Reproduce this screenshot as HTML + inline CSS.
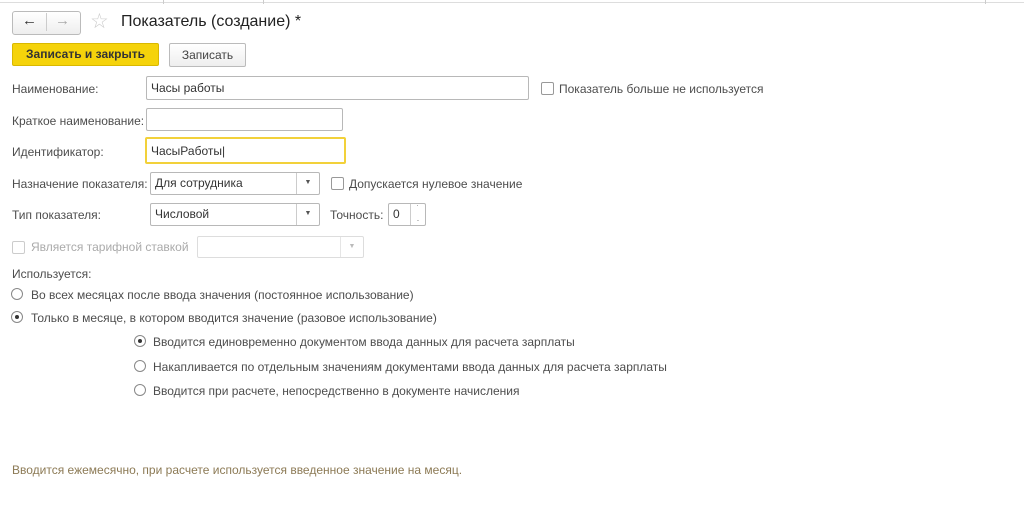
<!DOCTYPE html>
<html><head><meta charset="utf-8"><style>
body{margin:0;width:1024px;height:507px;background:#fff;font-family:"Liberation Sans",Arial,sans-serif;font-size:12px;color:#4d4d4d;position:relative;overflow:hidden}
.a{position:absolute;white-space:nowrap}
.inp{position:absolute;border:1px solid #b8b8b8;border-radius:2px;background:#fff;box-sizing:border-box;color:#333;padding:0 4px;line-height:20px}
.cb{position:absolute;width:11px;height:11px;border:1px solid #999;border-radius:2px;background:#fff}
.rb{position:absolute;width:12px;height:12px;border:1px solid #888;border-radius:50%;background:#fff;box-sizing:border-box}
.rb.on::after{content:"";position:absolute;left:3px;top:3px;width:4px;height:4px;border-radius:50%;background:#333}
.dd{position:absolute;right:0;top:0;bottom:0;width:22px;border-left:1px solid #ccc;text-align:center;font-size:7px;line-height:20px;color:#555}
</style></head><body>
<div class="a" style="left:0;top:0;width:1024px;height:2px;border-bottom:1px solid #ddd"></div>
<div class="a" style="left:163px;top:0;height:4px;border-left:1px solid #ccc"></div>
<div class="a" style="left:263px;top:0;height:4px;border-left:1px solid #ccc"></div>
<div class="a" style="left:985px;top:0;height:4px;border-left:1px solid #ccc"></div>
<div class="a" style="left:12px;top:11px;width:67px;height:22px;border:1px solid #bbb;border-radius:3px;background:linear-gradient(#fff,#eee)"></div>
<div class="a" style="left:46px;top:13px;height:18px;border-left:1px solid #ccc"></div>
<div class="a" style="left:22px;top:12px;font-size:15px;color:#333;font-weight:bold">&#8592;</div>
<div class="a" style="left:55px;top:12px;font-size:15px;color:#aaa">&#8594;</div>
<div class="a" style="left:90px;top:9px;font-size:21px;color:#ccc">&#9734;</div>
<div class="a" style="left:121px;top:13px;font-size:16px;color:#222">Показатель (создание) *</div>
<div class="a" style="left:12px;top:43px;width:147px;height:23px;background:#f5d30b;border:1px solid #d9b800;border-radius:2px;box-sizing:border-box;text-align:center;line-height:21px;color:#333;font-weight:bold">Записать и закрыть</div>
<div class="a" style="left:169px;top:43px;width:77px;height:24px;background:linear-gradient(#fff,#eee);border:1px solid #bbb;border-radius:2px;box-sizing:border-box;text-align:center;line-height:22px;color:#444">Записать</div>
<div class="a" style="left:12px;top:82px">Наименование:</div>
<div class="inp" style="left:146px;top:76px;width:383px;height:24px;line-height:22px">Часы работы</div>
<div class="cb" style="left:541px;top:82px"></div>
<div class="a" style="left:559px;top:82px">Показатель больше не используется</div>
<div class="a" style="left:12px;top:114px">Краткое наименование:</div>
<div class="inp" style="left:146px;top:108px;width:197px;height:23px"></div>
<div class="a" style="left:12px;top:145px">Идентификатор:</div>
<div class="inp" style="left:145px;top:137px;width:201px;height:27px;border:2px solid #f2d13a;line-height:25px">ЧасыРаботы|</div>
<div class="a" style="left:12px;top:177px">Назначение показателя:</div>
<div class="inp" style="left:150px;top:172px;width:170px;height:23px;line-height:21px">Для сотрудника<div class="dd">&#9660;</div></div>
<div class="cb" style="left:331px;top:177px"></div>
<div class="a" style="left:349px;top:177px">Допускается нулевое значение</div>
<div class="a" style="left:12px;top:208px">Тип показателя:</div>
<div class="inp" style="left:150px;top:203px;width:170px;height:23px;line-height:21px">Числовой<div class="dd">&#9660;</div></div>
<div class="a" style="left:330px;top:208px">Точность:</div>
<div class="inp" style="left:388px;top:203px;width:38px;height:23px;line-height:21px">0<div class="dd" style="width:14px;font-size:8px;line-height:10px">&#729;<br>.</div></div>
<div class="cb" style="left:12px;top:241px;border-color:#ccc"></div>
<div class="a" style="left:31px;top:240px;color:#aaa">Является тарифной ставкой</div>
<div class="inp" style="left:197px;top:236px;width:167px;height:22px;border-color:#ddd"><div class="dd" style="border-color:#e5e5e5;color:#bbb">&#9660;</div></div>
<div class="a" style="left:12px;top:267px">Используется:</div>
<div class="rb" style="left:11px;top:288px"></div>
<div class="a" style="left:31px;top:288px">Во всех месяцах после ввода значения (постоянное использование)</div>
<div class="rb on" style="left:11px;top:311px"></div>
<div class="a" style="left:31px;top:311px">Только в месяце, в котором вводится значение (разовое использование)</div>
<div class="rb on" style="left:134px;top:335px"></div>
<div class="a" style="left:153px;top:335px">Вводится единовременно документом ввода данных для расчета зарплаты</div>
<div class="rb" style="left:134px;top:360px"></div>
<div class="a" style="left:153px;top:360px">Накапливается по отдельным значениям документами ввода данных для расчета зарплаты</div>
<div class="rb" style="left:134px;top:384px"></div>
<div class="a" style="left:153px;top:384px">Вводится при расчете, непосредственно в документе начисления</div>
<div class="a" style="left:12px;top:463px;color:#8c7a55">Вводится ежемесячно, при расчете используется введенное значение на месяц.</div>
</body></html>
